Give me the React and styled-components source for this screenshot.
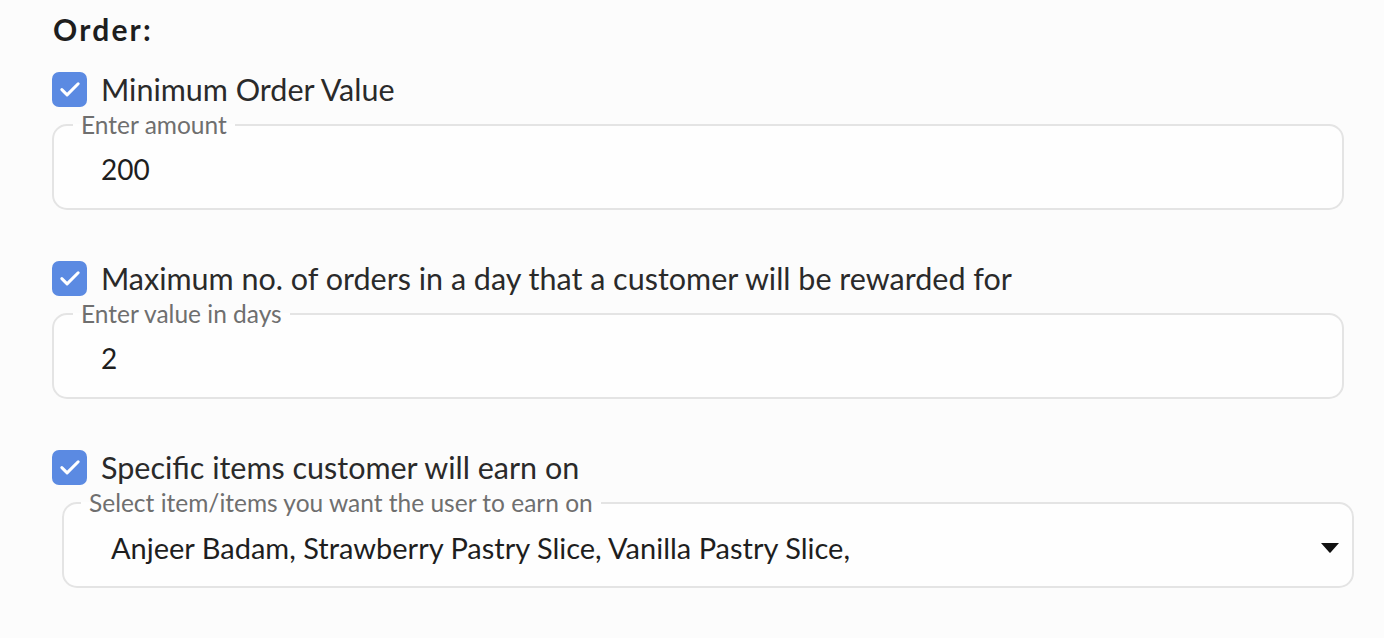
import React from "react";
import styled, { createGlobalStyle } from "styled-components";

const GlobalStyle = createGlobalStyle`
  html, body {
    margin: 0;
    padding: 0;
    background: #fcfcfc;
    font-family: Lato, "Liberation Sans", sans-serif;
    color: #262626;
  }
`;

const Page = styled.div`
  width: 1384px;
  height: 638px;
  padding: 9px 0 0 52px;
  box-sizing: border-box;
  overflow: hidden;
`;

const Title = styled.h2`
  margin: 0 0 20px 1px;
  font-size: 30px;
  font-weight: 700;
  line-height: 40px;
  letter-spacing: 2.2px;
  color: #1e1e1e;
`;

const Group = styled.div`
  width: 1292px;
  margin-left: ${({ shift }) => shift || 0}px;
  margin-bottom: 48px;
`;

const CheckRow = styled.label`
  display: flex;
  align-items: center;
  gap: 14px;
  height: 40px;
  margin-left: ${({ shift }) => (shift ? -shift : 0)}px;
  font-size: 30.5px;
  color: #2a2a2a;
`;

const Box = styled.span`
  width: 35px;
  height: 35px;
  border-radius: 7px;
  background: #5b8ae2;
  display: flex;
  align-items: center;
  justify-content: center;
  flex-shrink: 0;
`;

const Field = styled.fieldset`
  margin: 4px 0 0;
  padding: 0 19px 9px;
  border: 2px solid #e4e4e4;
  border-radius: 15px;
  background: #fefefe;
`;

const Legend = styled.legend`
  padding: 0 8px;
  font-size: 24.5px;
  line-height: 24px;
  color: #6f6f6f;
  margin-left: ${({ shift }) => shift || 0}px;
`;

const Value = styled.div`
  display: flex;
  align-items: center;
  justify-content: space-between;
  height: 60px;
  margin-top: 2px;
  padding-left: 28px;
  font-size: ${({ select }) => (select ? 29 : 28)}px;
  color: #1e1e1e;
`;

const Caret = styled.svg`
  margin-right: -7px;
  flex-shrink: 0;
`;

const Check = () => (
  <Box>
    <svg width="28" height="28" viewBox="0 0 24 24">
      <path
        d="M5 12.5l4.5 4.5L19 7.5"
        fill="none"
        stroke="#fff"
        strokeWidth="2.6"
        strokeLinecap="round"
        strokeLinejoin="round"
      />
    </svg>
  </Box>
);

const groups = [
  { label: "Minimum Order Value", legend: "Enter amount", value: "200" },
  {
    label: "Maximum no. of orders in a day that a customer will be rewarded for",
    legend: "Enter value in days",
    value: "2",
  },
  {
    label: "Specific items customer will earn on",
    legend: "Select item/items you want the user to earn on",
    value: "Anjeer Badam, Strawberry Pastry Slice, Vanilla Pastry Slice,",
    select: true,
    shift: 10,
  },
];

export default function App() {
  return (
    <>
      <GlobalStyle />
      <Page>
        <Title>Order:</Title>
        {groups.map((g) => (
          <Group key={g.label} shift={g.shift}>
            <CheckRow shift={g.shift}>
              <Check />
              {g.label}
            </CheckRow>
            <Field>
              <Legend shift={g.select ? -2 : 0}>{g.legend}</Legend>
              <Value select={g.select}>
                {g.value}
                {g.select && (
                  <Caret width="20" height="11" viewBox="0 0 20 11">
                    <path d="M1 1h18l-8.2 9.2a1 1 0 0 1-1.6 0z" fill="#111" />
                  </Caret>
                )}
              </Value>
            </Field>
          </Group>
        ))}
      </Page>
    </>
  );
}
